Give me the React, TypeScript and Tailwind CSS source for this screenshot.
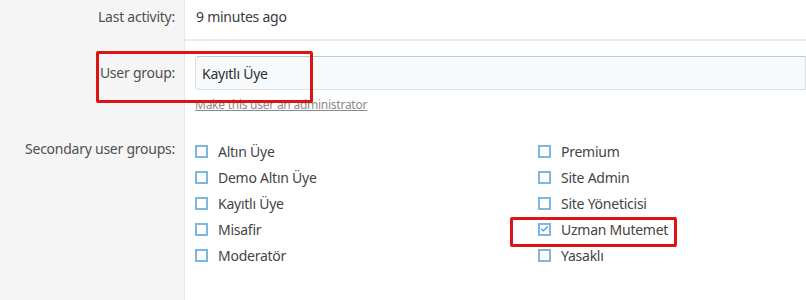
import { Check } from 'lucide-react';

const leftGroups = ['Altın Üye', 'Demo Altın Üye', 'Kayıtlı Üye', 'Misafir', 'Moderatör'];
const rightGroups = ['Premium', 'Site Admin', 'Site Yöneticisi', 'Uzman Mutemet', 'Yasaklı'];

function Box({ label, checked }: { label: string; checked?: boolean }) {
    return (
        <label className="flex items-center h-[26px] gap-[10px]">
            <span className="w-[13px] h-[13px] border-2 border-[#7db7e0] bg-white flex items-center justify-center">
                {checked && <Check size={10} strokeWidth={3} className="text-[#3d8fd0]" />}
            </span>
            <span>{label}</span>
        </label>
    );
}

export default function App() {
    return (
        <div className="relative w-[806px] h-[300px] overflow-hidden bg-white text-[14px] tracking-[-0.25px] text-[#505050]" style={{ fontFamily: '"Noto Sans", "Open Sans", sans-serif' }}>
            <div className="flex h-[41px]">
                <div className="w-[185px] shrink-0 bg-[#f5f5f5] border-r border-[#e8e8e8] pr-[9px] pt-[6px] text-right">Last activity:</div>
                <div className="flex-1 border-b-2 border-[#e9e9e9] pl-[11px] pt-[6px] text-[#3a3a3a]">9 minutes ago</div>
            </div>
            <div className="flex h-[86px]">
                <div className="w-[185px] shrink-0 bg-[#f5f5f5] border-r border-[#e8e8e8] pr-[9px] pt-[21px] text-right">User group:</div>
                <div className="flex-1 pl-[10px] pt-[15px]">
                    <div className="h-[34px] rounded-l-[4px] border border-[#dcdfe2] border-t-[#c4c8cc] bg-[#f7fafd] pl-[6px] flex items-center text-[#2f2f2f]">Kayıtlı Üye</div>
                    <a className="block mt-[6px] text-[12px] text-[#8a8a8a] underline">Make this user an administrator</a>
                </div>
            </div>
            <div className="flex h-[173px]">
                <div className="w-[185px] shrink-0 bg-[#f5f5f5] border-r border-[#e8e8e8] pr-[9px] pt-[11px] text-right">Secondary user groups:</div>
                <div className="flex-1 pl-[10px] pt-[11px] grid grid-cols-[343px_1fr] text-[#444]">
                    <div>
                        {leftGroups.map((g) => <Box key={g} label={g} />)}
                    </div>
                    <div>
                        {rightGroups.map((g) => <Box key={g} label={g} checked={g === 'Uzman Mutemet'} />)}
                    </div>
                </div>
            </div>

            {/* highlight boxes */}
            <div className="absolute left-[96px] top-[51px] w-[217px] h-[52px] border-[3px] border-[#dd1414] rounded-[2px]" />
            <div className="absolute left-[510px] top-[217px] w-[167px] h-[30px] border-[3px] border-[#dd1414] rounded-[2px]" />
        </div>
    );
}
